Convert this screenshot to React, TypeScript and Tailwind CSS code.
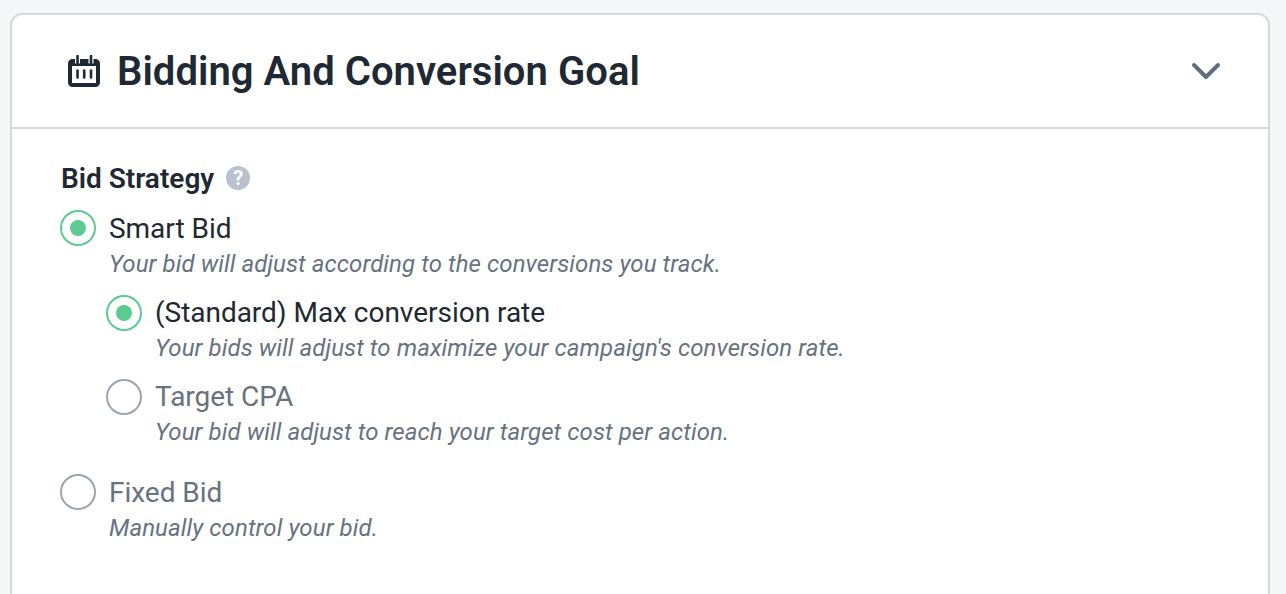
function Radio({ on }: { on?: boolean }) {
  return (
    <span className={`flex h-9 w-9 shrink-0 items-center justify-center rounded-full border-2 bg-white ${on ? "border-[#5ccb8f]" : "border-[#9aa5b1]"}`}>
      {on && <span className="h-4 w-4 rounded-full bg-[#5ccb8f]" />}
    </span>
  );
}

function Option({ label, hint, on, nested, className = "" }: { label: string; hint: string; on?: boolean; nested?: boolean; className?: string }) {
  return (
    <div className={className}>
      <div className="flex h-9 items-center gap-[13px]">
        <Radio on={on} />
        <span className={`${nested ? "" : "pt-[1px]"} text-[28px] tracking-[-0.03px] ${on ? "text-[#1f2933]" : "text-[#66727f]"}`}>{label}</span>
      </div>
      <p className={`${nested ? "mt-[2px] pb-[1px]" : "mt-[3px]"} pl-[49px] text-[24px] leading-[30px] italic tracking-[0.085px] text-[#66727f]`}>{hint}</p>
    </div>
  );
}

export default function App() {
  return (
    <div className="h-[594px] overflow-hidden bg-[#f5f6f8] pt-[13px] pl-[10px] pr-[16px] font-['Roboto',sans-serif]">
      <div className="h-[640px] rounded-t-[12px] border-2 border-[#d5d8dd] bg-white">
        <div className="flex h-[114px] items-center justify-between border-b-2 border-[#d5d8dd] pt-[2px] pl-[56px] pr-[47px]">
          <div className="flex items-center gap-[17px]">
            <svg width="32" height="32" viewBox="0 0 32 32" fill="none" className="-mt-[2px]">
              <rect x="2" y="6" width="28" height="24" rx="2.5" stroke="#1f2933" strokeWidth="4" />
              <path d="M2 9h28" stroke="#1f2933" strokeWidth="4" />
              <path d="M9.5 1.5v7M23 1.5v7" stroke="#fff" strokeWidth="5" />
              <path d="M9.5 1v8M23 1v8" stroke="#1f2933" strokeWidth="2.6" strokeLinecap="round" />
              <path d="M9.5 15.5v7M16.2 15.5v7M23 15.5v7" stroke="#1f2933" strokeWidth="2.6" strokeLinecap="round" />
            </svg>
            <h1 className="text-[40px] font-semibold tracking-[0.04px] text-[#1f2933]">Bidding And Conversion Goal</h1>
          </div>
          <svg width="30" height="20" viewBox="0 0 30 20" fill="none">
            <path d="M3 3l12 12L27 3" stroke="#616e7c" strokeWidth="4" strokeLinecap="round" strokeLinejoin="round" />
          </svg>
        </div>
        <div className="pl-[48px] pt-[31px]">
          <div className="flex h-9 items-center gap-3 pl-[1px]">
            <span className="pt-[1px] text-[28px] font-semibold text-[#1f2933]">Bid Strategy</span>
            <span className="flex h-6 w-6 items-center justify-center rounded-full bg-[#b8c1cc] text-[20px] font-bold text-white">?</span>
          </div>
          <Option className="mt-[14px]" label="Smart Bid" hint="Your bid will adjust according to the conversions you track." on />
          <div className="pl-[46px]">
            <Option className="mt-[16px]" nested label="(Standard) Max conversion rate" hint="Your bids will adjust to maximize your campaign's conversion rate." on />
            <Option className="mt-[15px]" nested label="Target CPA" hint="Your bid will adjust to reach your target cost per action." />
          </div>
          <Option className="mt-[26px]" label="Fixed Bid" hint="Manually control your bid." />
        </div>
      </div>
    </div>
  );
}
